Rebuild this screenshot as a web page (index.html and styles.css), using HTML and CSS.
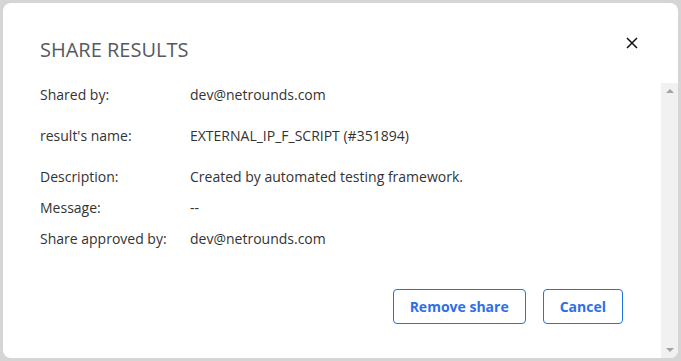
FILE: index.html
```html
<!DOCTYPE html>
<html lang="en">
<head>
    <meta charset="UTF-8">
    <meta name="viewport" content="width=device-width, initial-scale=1.0">
    <title>Share results</title>
    <link rel="stylesheet" href="styles.css">
</head>
<body>
    <div class="dialog">
        <div class="dialog-header">
            <h1>SHARE RESULTS</h1>
            <button class="close" aria-label="Close">
                <svg width="12" height="12" viewBox="0 0 12 12">
                    <path d="M1 1 L11 11 M11 1 L1 11" stroke="#111" stroke-width="1.5" fill="none"/>
                </svg>
            </button>
        </div>

        <div class="dialog-body">
            <div class="content">
                <div class="row first">
                    <div class="label">Shared by:</div>
                    <div class="value">dev@netrounds.com</div>
                </div>
                <div class="row spaced">
                    <div class="label">result's name:</div>
                    <div class="value">EXTERNAL_IP_F_SCRIPT (#351894)</div>
                </div>
                <div class="row spaced">
                    <div class="label">Description:</div>
                    <div class="value">Created by automated testing framework.</div>
                </div>
                <div class="row">
                    <div class="label">Message:</div>
                    <div class="value">--</div>
                </div>
                <div class="row">
                    <div class="label">Share approved by:</div>
                    <div class="value">dev@netrounds.com</div>
                </div>

                <div class="actions">
                    <button class="btn">Remove share</button>
                    <button class="btn">Cancel</button>
                </div>
            </div>

            <div class="scrollbar">
                <span class="arrow up"></span>
                <span class="arrow down"></span>
            </div>
        </div>
    </div>
</body>
</html>
```

FILE: styles.css
```css
html, body {
    margin: 0;
    height: 100%;
}
body {
    background-color: #d5d5d5;
    padding: 3px;
    box-sizing: border-box;
    font-family: "Open Sans", Arial, sans-serif;
    color: #333;
}
.dialog {
    background-color: #fff;
    border-radius: 8px;
    height: 100%;
    display: flex;
    flex-direction: column;
    overflow: hidden;
}
.dialog-header {
    display: flex;
    justify-content: space-between;
    align-items: flex-start;
    padding: 34px 40px 0 37px;
    height: 46px;
}
h1 {
    margin: 0;
    font-size: 20px;
    font-weight: 400;
    color: #555a60;
    line-height: 26px;
}
.close {
    background: none;
    border: none;
    padding: 0;
    margin-top: 0;
    width: 12px;
    height: 12px;
    display: flex;
    cursor: pointer;
}
.dialog-body {
    flex: 1;
    display: flex;
}
.content {
    flex: 1;
    padding: 0 37px;
    font-size: 14px;
}
.row {
    display: flex;
    line-height: 20px;
    margin-top: 11px;
}
.row.first {
    margin-top: 2px;
}
.row.spaced {
    margin-top: 21px;
}
.row .label {
    width: 150px;
}
.actions {
    display: flex;
    justify-content: flex-end;
    gap: 17px;
    margin-top: 40px;
    padding-right: 1px;
}
.btn {
    font-family: "Open Sans", Arial, sans-serif;
    font-size: 14px;
    font-weight: 700;
    color: #2d6fe6;
    background: #fff;
    border: 1px solid #1f74e6;
    border-radius: 4px;
    height: 35px;
    padding: 0 16px;
    cursor: pointer;
}
.scrollbar {
    width: 17px;
    background-color: #f1f1f1;
    display: flex;
    flex-direction: column;
    justify-content: space-between;
    align-items: center;
    padding: 6px 0;
}
.arrow {
    width: 0;
    height: 0;
    border-left: 4px solid transparent;
    border-right: 4px solid transparent;
}
.arrow.up {
    border-bottom: 4px solid #a3a3a3;
}
.arrow.down {
    border-top: 4px solid #a3a3a3;
}
```
